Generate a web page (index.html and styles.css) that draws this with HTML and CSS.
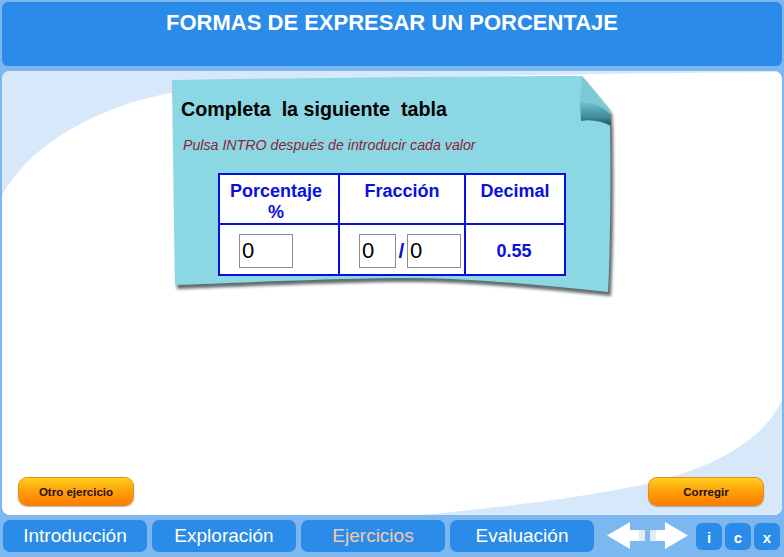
FILE: index.html
```html
<!DOCTYPE html>
<html lang="es">
<head>
    <meta charset="UTF-8">
    <title>Formas de expresar un porcentaje</title>
    <link rel="stylesheet" href="styles.css">
</head>
<body>
<div id="app">
    <div id="header">FORMAS DE EXPRESAR UN PORCENTAJE</div>

    <div id="panel">
        <svg class="swoosh" viewBox="0 0 780 444" preserveAspectRatio="none">
            <path d="M0,0 H780 V1 C500,3 260,8 168,22 C100,35 30,70 0,124 Z" fill="#d7e8fa"/>
            <path d="M780,444 V330 C760,368 720,395 640,414 C560,430 480,438 420,444 Z" fill="#d7e8fa"/>
        </svg>

        <div id="note">
            <svg class="paper" viewBox="0 0 446 224">
                <defs>
                    <filter id="blur" x="-10%" y="-10%" width="120%" height="130%">
                        <feGaussianBlur stdDeviation="1.6"/>
                    </filter>
                    <linearGradient id="roll" x1="0" y1="0" x2="0" y2="1">
                        <stop offset="0" stop-color="#6fbccb"/>
                        <stop offset="0.6" stop-color="#3f8d9c"/>
                        <stop offset="1" stop-color="#1f4f58"/>
                    </linearGradient>
                </defs>
                <!-- shadow under the sheet -->
                <path d="M4,10 C140,8 300,6 414,6 L442,40 L443,56 C444,120 443,180 441,222 C362,214 292,207 225,208 C150,209 62,213 7,215 Z"
                      fill="#2f3a3c" opacity="0.75" filter="url(#blur)"/>
                <path d="M2,6 C140,4 300,2 412,2 L440,36 L440,51 C441,120 440,180 438,218 C360,210 290,203 223,204 C150,205 60,209 5,211 C4,140 3,60 2,6 Z"
                      fill="#8bd8e4"/>
                <path d="M412,2 C422,14 432,26 440,36 L440,44 C430,36 420,32 410,30 Z" fill="#7cc8d5"/>
                <path d="M410,29 C422,28 432,32 440,40 L441,52 C432,47 420,45 411,47 Z" fill="url(#roll)"/>
            </svg>

            <div class="note-title">Completa&nbsp; la siguiente&nbsp; tabla</div>
            <div class="note-hint">Pulsa INTRO después de introducir cada valor</div>

            <table class="grid">
                <colgroup>
                    <col class="c1">
                    <col class="c2">
                    <col class="c3">
                </colgroup>
                <tr class="head">
                    <td>Porcentaje<br>%</td>
                    <td>Fracción</td>
                    <td>Decimal</td>
                </tr>
                <tr class="body">
                    <td class="left"><input class="box wide" type="text" value="0"></td>
                    <td class="left">
                        <div class="fraction">
                            <input class="box narrow" type="text" value="0">
                            <span class="slash">/</span>
                            <input class="box wide" type="text" value="0">
                        </div>
                    </td>
                    <td class="value">0.55</td>
                </tr>
            </table>
        </div>

        <div class="actions">
            <button class="btn-orange">Otro ejercicio</button>
            <button class="btn-orange">Corregir</button>
        </div>
    </div>

    <div id="nav">
        <div class="tab">Introducción</div>
        <div class="tab">Exploración</div>
        <div class="tab current">Ejercicios</div>
        <div class="tab">Evaluación</div>
        <svg class="arrows" viewBox="0 0 92 32" width="92" height="32">
            <path d="M8,15.5 L31,2 L31,10 L46,10 L46,21 L31,21 L31,29 Z" fill="#ffffff"/>
            <rect x="40" y="10" width="6" height="11" fill="#e6ebf2"/>
            <path d="M89,15.5 L66,2 L66,10 L51,10 L51,21 L66,21 L66,29 Z" fill="#ffffff"/>
            <rect x="51" y="10" width="6" height="11" fill="#e6ebf2"/>
        </svg>
        <div class="mini">i</div>
        <div class="mini">c</div>
        <div class="mini">x</div>
    </div>
</div>
</body>
</html>
```

FILE: styles.css
```css
body {
    margin: 0;
    background: #7db7ef;
    font-family: "Liberation Sans", Arial, sans-serif;
}

#app {
    width: 784px;
    height: 557px;
    box-sizing: border-box;
    padding: 2px 2px 0;
    display: flex;
    flex-direction: column;
}

#header {
    height: 64px;
    box-sizing: border-box;
    padding-top: 8px;
    background: #2b8be9;
    border-radius: 6px;
    color: #fff;
    font-size: 22px;
    font-weight: bold;
    line-height: 26px;
    text-align: center;
}

#panel {
    position: relative;
    margin-top: 5px;
    height: 444px;
    box-sizing: border-box;
    padding: 3px 18px 9px 16px;
    background: #fff;
    border-radius: 8px;
    overflow: hidden;
    display: flex;
    flex-direction: column;
}

.swoosh {
    position: absolute;
    left: 0;
    top: 0;
    width: 100%;
    height: 100%;
}

/* the paper note */
#note {
    position: relative;
    margin-left: 152px;
    width: 446px;
    height: 224px;
    box-sizing: border-box;
    padding: 24px 0 0 11px;
}

.paper {
    position: absolute;
    left: 0;
    top: 0;
    width: 446px;
    height: 224px;
}

.note-title {
    position: relative;
    font-size: 19.7px;
    font-weight: bold;
    line-height: 22px;
    color: #000;
}

.note-hint {
    position: relative;
    margin-top: 17px;
    margin-left: 2px;
    font-size: 14.2px;
    font-style: italic;
    line-height: 17px;
    color: #8a2436;
}

.grid {
    position: relative;
    margin: 19px 0 0 37px;
    width: 346px;
    border-collapse: collapse;
    table-layout: fixed;
    background: #fff;
}

.grid .c1 { width: 120px; }
.grid .c2 { width: 126px; }
.grid .c3 { width: 100px; }

.grid td {
    border: 2px solid #0a10dc;
    padding: 0;
    text-align: center;
    color: #0a10dc;
    font-weight: bold;
    font-size: 18px;
}

.grid .head td {
    height: 50px;
    vertical-align: top;
    padding-top: 6px;
    line-height: 21px;
    box-sizing: border-box;
}

.grid .head td:first-child {
    padding-right: 6px;
}

.grid .body td {
    height: 46px;
    padding-top: 3px;
}

.grid td.left {
    text-align: left;
    padding-left: 19px;
}

.fraction {
    display: flex;
    align-items: center;
    gap: 2px;
}

.box {
    display: block;
    height: 34px;
    box-sizing: border-box;
    border: 1px solid #8c8c8c;
    padding: 0 0 0 2px;
    margin: 0;
    font-family: "Liberation Sans", Arial, sans-serif;
    font-size: 22px;
    color: #000;
    background: #fff;
}

.box.wide { width: 54px; }
.box.narrow { width: 37px; }

.slash {
    width: 7px;
    text-align: center;
    font-size: 21px;
    font-weight: bold;
    color: #0a10dc;
}

.grid td.value {
    font-size: 18px;
    padding-right: 2px;
}

/* bottom buttons */
.actions {
    position: relative;
    margin-top: auto;
    display: flex;
    justify-content: space-between;
}

.btn-orange {
    width: 116px;
    height: 29px;
    border: 1px solid #e88a1a;
    border-radius: 9px;
    background: linear-gradient(#ffd21e, #ffa20c 45%, #ff7c00);
    box-shadow: 0 1px 1px rgba(120, 60, 0, 0.4);
    color: #231000;
    font-family: "Liberation Sans", Arial, sans-serif;
    font-size: 11.5px;
    font-weight: bold;
    padding: 0;
}

/* navigation bar */
#nav {
    margin-top: 5px;
    height: 32px;
    padding-left: 1px;
    display: flex;
    align-items: center;
    gap: 5px;
}

.tab {
    width: 144px;
    height: 32px;
    border-radius: 7px;
    background: #2b8be9;
    color: #fff;
    font-size: 19px;
    line-height: 32px;
    text-align: center;
}

.tab.current {
    color: #f0cbab;
}

.arrows {
    display: block;
}

.mini {
    width: 26px;
    height: 27px;
    margin-right: -2px;
    border-radius: 6px;
    background: #2b8be9;
    color: #fff;
    font-size: 15px;
    font-weight: bold;
    line-height: 29px;
    text-align: center;
}
```
